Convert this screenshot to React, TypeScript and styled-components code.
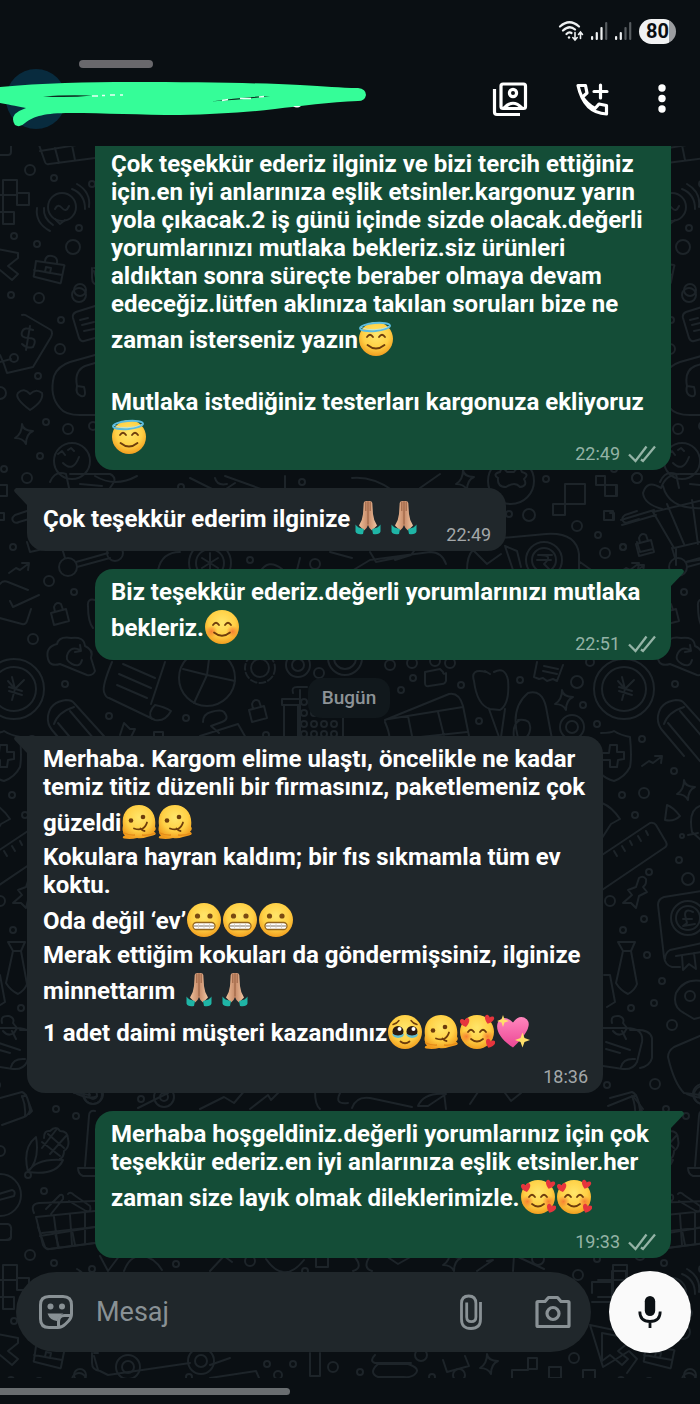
import React from 'react';
import styled, { createGlobalStyle } from 'styled-components';

const GlobalStyle = createGlobalStyle`
  * { box-sizing: border-box; }
  body { margin: 0; background: #0a0f13; font-family: Roboto, "Noto Sans", sans-serif; }
  button { border: 0; padding: 0; background: none; color: inherit; cursor: pointer; display: flex; align-items: center; justify-content: center; }
`;

const Screen = styled.div`
  color: #fff;
  background: #0a0f13;
  overflow: hidden;
`;

const StatusBar = styled.div`
  display: flex;
  align-items: center;
  justify-content: flex-end;
  gap: 7px;
  height: 56px;
  padding: 6px 24px 0 0;
`;

const Battery = styled.span`
  display: flex;
  align-items: center;
  justify-content: center;
  width: 37px;
  height: 25px;
  border-radius: 13px;
  background: linear-gradient(90deg, #f1f2f3 80%, #9b9da0 80%);
  color: #0a0f13;
  font-size: 20px;
  font-weight: 700;
  line-height: 25px;
`;

const Header = styled.header`
  display: flex;
  align-items: center;
  justify-content: space-between;
  height: 90px;
`;

const HeaderActions = styled.div`
  display: flex;
  align-items: center;
  gap: 34px;
  padding: 0 26px 4px 0;
`;

const IconButton = styled.button<{ $width: number }>`
  width: ${(p) => p.$width}px;
  height: 48px;
`;

const ChatArea = styled.div`
  position: relative;
  overflow: hidden;
  padding-bottom: 25px;
`;

const Wallpaper = styled.svg`
  position: absolute;
  inset: 0;
  width: 100%;
  height: 100%;
`;

const Messages = styled.main`
  position: relative;
  display: flex;
  flex-direction: column;
  gap: 18px;
  padding: 0 29px 13px 27px;
`;

const Bubble = styled.article<{ $sent?: boolean; $continued?: boolean }>`
  position: relative;
  align-self: ${(p) => (p.$sent ? 'flex-end' : 'flex-start')};
  max-width: 576px;
  padding: ${(p) => (p.$continued ? 4 : 9)}px 15px 6px 16px;
  background: ${(p) => (p.$sent ? '#144d37' : '#20272b')};
  border-radius: ${(p) => (p.$continued ? '0 0 18px 18px' : p.$sent ? '18px 0 18px 18px' : '0 18px 18px 18px')};

  &::after {
    content: ${(p) => (p.$continued ? 'none' : '""')};
    position: absolute;
    top: 0;
    ${(p) => (p.$sent ? 'left: 100%' : 'right: 100%')};
    width: 13px;
    height: 17px;
    background: inherit;
    clip-path: ${(p) =>
      p.$sent ? 'polygon(0 0, 85% 0, 100% 12%, 95% 24%, 0 100%)' : 'polygon(100% 0, 15% 0, 0 12%, 5% 24%, 100% 100%)'};
  }
`;

const Text = styled.p`
  margin: 0;
  font-size: 24px;
  font-weight: 700;
  line-height: 28px;
`;

const StampSpace = styled.span<{ $width: number }>`
  display: inline-block;
  width: ${(p) => p.$width}px;
  height: 1px;
`;

const Stamp = styled.footer<{ $sent?: boolean }>`
  display: flex;
  justify-content: flex-end;
  align-items: center;
  gap: 8px;
  height: 20px;
  margin-top: -14px;
  font-size: 18px;
  line-height: 20px;
  color: ${(p) => (p.$sent ? '#94b3a6' : '#a3a7a9')};
`;

const DatePill = styled.time`
  align-self: center;
  padding: 0 14px;
  border-radius: 14px;
  background: #11181c;
  color: #8d9397;
  font-size: 19px;
  font-weight: 500;
  line-height: 40px;
`;

const EmojiSvg = styled.svg`
  width: 36px;
  height: 42px;
  vertical-align: -12px;
`;

const Composer = styled.form`
  position: relative;
  display: flex;
  align-items: center;
  gap: 18px;
  padding: 0 9px 0 16px;
`;

const Field = styled.div`
  flex: 1;
  display: flex;
  align-items: center;
  height: 80px;
  padding: 0 18px 0 20px;
  border-radius: 40px;
  background: #20272b;
  color: #899195;
`;

const MessageInput = styled.input`
  flex: 1;
  min-width: 0;
  margin-left: 18px;
  border: 0;
  outline: 0;
  background: none;
  color: #fff;
  font: 400 27px Roboto, sans-serif;
  &::placeholder { color: #899195; opacity: 1; }
`;

const FieldActions = styled.div`
  display: flex;
  gap: 42px;
`;

const MicButton = styled.button`
  width: 82px;
  height: 82px;
  && { background: #fafafa; }
  border-radius: 50%;
`;

const GestureBar = styled.div`
  height: 26px;
  padding-top: 10px;
  &::before {
    content: "";
    display: block;
    width: 42%;
    max-width: 290px;
    height: 7px;
    border-radius: 0 4px 4px 0;
    background: #696d70;
  }
`;

/* ---------- Emoji ---------- */

type EmojiName = 'halo' | 'smile' | 'melt' | 'grimace' | 'pray' | 'tears' | 'love' | 'sparkleHeart';

const emojiLabels: Record<EmojiName, string> = {
  halo: '😇', smile: '😊', melt: '🫠', grimace: '😬', pray: '🙏🏼', tears: '🥹', love: '🥰', sparkleHeart: '💖',
};

const GradientDefs = styled.svg`
  position: absolute;
  width: 0;
  height: 0;
`;

const Gradients = () => (
  <GradientDefs aria-hidden="true">
    <defs>
      <radialGradient id="face" cx="50%" cy="38%" r="64%">
        <stop offset="0" stopColor="#ffe66b" />
        <stop offset="0.6" stopColor="#ffd045" />
        <stop offset="1" stopColor="#f09a1c" />
      </radialGradient>
      <radialGradient id="blush">
        <stop offset="0" stopColor="#f4682c" stopOpacity="0.75" />
        <stop offset="1" stopColor="#f4682c" stopOpacity="0" />
      </radialGradient>
      <linearGradient id="skin" x1="0" x2="1">
        <stop offset="0" stopColor="#efc09b" />
        <stop offset="0.5" stopColor="#c68a68" />
        <stop offset="1" stopColor="#f2c6a3" />
      </linearGradient>
      <linearGradient id="pink" x1="0" y1="0" x2="0" y2="1">
        <stop offset="0" stopColor="#ff86bd" />
        <stop offset="1" stopColor="#ec4795" />
      </linearGradient>
    </defs>
  </GradientDefs>
);

const Disc = () => <circle cx="18" cy="20.500" r="17" fill="url(#face)" />;
const Brown = { stroke: '#6d3c0c', strokeWidth: 1.8, fill: 'none', strokeLinecap: 'round' as const };
const HappyEyes = () => <path d="M9 18.500q3-4.500 6 0M21 18.500q3-4.500 6 0" {...Brown} />;
const Blush = () => (
  <>
    <circle cx="7.500" cy="25" r="6" fill="url(#blush)" />
    <circle cx="28.500" cy="25" r="6" fill="url(#blush)" />
  </>
);
const heart = 'M0 4.500C-6 0.500-5.500-4-2.500-4Q-0.500-4 0-2Q1-4 3-4C6-3.500 5 1.500 0 4.500Z';

const emojiArt: Record<EmojiName, React.ReactNode> = {
  halo: (
    <>
      <Disc /><HappyEyes />
      <path d="M9.500 26.500q8.500 7 17 0" {...Brown} />
      <ellipse cx="17" cy="8.500" rx="15" ry="4" transform="rotate(-5 17 8.500)" fill="none" stroke="#5bbce0" strokeWidth="2" />
      <path d="M3 9q13 5 28-1" stroke="#b4e6f4" strokeWidth="0.800" fill="none" />
    </>
  ),
  smile: (<><Disc /><Blush /><HappyEyes /><path d="M10 26q8 6.500 16 0" {...Brown} /></>),
  melt: (
    <>
      <path d="M2 24C0 11 8 3.500 18 3.500S36 12 34 25q2 3-1 5q4 3-1 4q-3 .5-6 1.500q-5 2-10 1q-6 1.500-13 .5q-3-1.500 1-3q-2-1-2-4q-1-2 0-6Z" fill="url(#face)" />
      <path d="M2 31q6 3 12 2.500M34 31.500q-7 3-13 2" stroke="#e58b19" strokeWidth="1.300" fill="none" />
      <circle cx="10" cy="19" r="2.300" fill="#6d3c0c" /><circle cx="22" cy="15.500" r="2.300" fill="#6d3c0c" />
      <path d="M13 27q10 3.500 13-6M19.500 27q2 2.500 4 2.500" {...Brown} />
    </>
  ),
  grimace: (
    <>
      <Disc />
      <circle cx="11.500" cy="16.500" r="2.600" fill="#7a4a12" /><circle cx="24" cy="16.500" r="2.600" fill="#7a4a12" />
      <rect x="7" y="23" width="22" height="7" rx="3.500" fill="#fff" stroke="#94661c" strokeWidth="1.300" />
      <path d="M8 26.500h20" stroke="#8b7f6c" strokeWidth="1.100" />
      <path d="M12.500 24v5M18 24v5M23.500 24v5" stroke="#cfcac0" strokeWidth="0.800" />
    </>
  ),
  pray: (
    <>
      <path d="M17.500 3.500q-3.500-.5-3.800 2l-.7 11q-.5 6-4 11.500l5 5q3-2 4-5.500q1 3.500 4 5.500l5-5q-3.500-5.500-4-11.500l-.7-11q-.3-2.500-3.800-2Z" fill="url(#skin)" />
      <path d="M18 4v23M15.800 4.500v9M20.200 4.500v9" stroke="#925b3d" strokeWidth="0.900" fill="none" />
      <path d="M5.500 27q2 3.500 8.500 4.500l-1 5q-6.500 1-7.500-2.500ZM30.500 27q-2 3.500-8.500 4.500l1 5q6.500 1 7.500-2.500Z" fill="#1fb5a6" />
    </>
  ),
  tears: (
    <>
      <Disc />
      <path d="M6 13q4-1 6-4M30 13q-4-1-6-4" {...Brown} strokeWidth="1.400" />
      <circle cx="11" cy="20" r="5.500" fill="#2a1a12" /><circle cx="25" cy="20" r="5.500" fill="#2a1a12" />
      <circle cx="12.500" cy="17.500" r="2" fill="#fff" /><circle cx="26.500" cy="17.500" r="2" fill="#fff" />
      <path d="M5 22q6 4 12 0q0 4-6 4.500q-5-.5-6-4.500ZM19 22q6 4 12 0q0 4-6 4.500q-5-.5-6-4.500Z" fill="#63bdd0" />
      <path d="M13.500 30q4.500 3.500 9 0" {...Brown} />
    </>
  ),
  love: (
    <>
      <Disc /><Blush />
      <g transform="translate(0 2)"><HappyEyes /></g>
      <path d="M12 27.500q6 5 12 0" {...Brown} />
      <g fill="#e6353d">
        <path d={heart} transform="translate(6 11) rotate(-12)" />
        <path d={heart} transform="translate(30 8) rotate(18)" />
        <path d={heart} transform="translate(31 32) rotate(20)" />
      </g>
    </>
  ),
  sparkleHeart: (
    <>
      <path d="M18 36C4 27-1 16 4 9q6-6 14 2q7-9 14-3q7 8-14 28Z" fill="url(#pink)" />
      <path d="M8 3.500l1.500 4.500 4.500 1.500-4.500 1.500-1.500 4.500-1.500-4.500-4.500-1.500 4.500-1.500ZM27.500 21l2 5.500 5.500 2-5.500 2-2 5.500-2-5.500-5.500-2 5.500-2Z" fill="#ffdf6a" />
    </>
  ),
};

const Emoji = ({ name }: { name: EmojiName }) => (
  <EmojiSvg viewBox="0 0 36 41" role="img" aria-label={emojiLabels[name]}>{emojiArt[name]}</EmojiSvg>
);

/* ---------- Icons ---------- */

const Ticks = () => (
  <svg width="28" height="18" viewBox="0 0 28 18" fill="none" stroke="currentColor" strokeWidth="2.300" role="img" aria-label="İletildi">
    <path d="M1 9.500L7.500 16L18.500 1.500M13 14.500L15 16L27 1.500" />
  </svg>
);

const Wifi = () => (
  <svg width="26" height="22" viewBox="0 0 26 22" fill="none" stroke="#eef0f1" strokeWidth="2.200" strokeLinecap="round" aria-hidden="true">
    <path d="M2 6.500Q11.500-2 21 6.500M5 10.500Q11.500 4.500 17 9.500M8.500 14Q11 11.500 13.500 13" />
    <circle cx="11" cy="17.500" r="1.200" fill="#eef0f1" stroke="none" />
    <path d="M17 12.500v7M14.800 17.500l2.200 2.500 2.200-2.500M22.500 18.500v-6M20.500 14.500l2-2.500 2 2.500" strokeWidth="1.600" />
  </svg>
);

const Signal = ({ level }: { level: number }) => (
  <svg width="17" height="20" viewBox="0 0 17 20" aria-hidden="true">
    {[4, 8, 13, 18].map((h, i) => (
      <rect key={h} x={i * 4.7} y={19 - h} width="2.200" height={h} rx="1" fill={i < level ? '#eef0f1' : '#565b5f'} />
    ))}
  </svg>
);

const Contact = () => (
  <svg width="372" height="90" viewBox="0 56 372 90" role="img" aria-label="Kişi bilgisi gizlendi">
    <rect x="79" y="60" width="74" height="8" rx="4" fill="#69686c" />
    <circle cx="36" cy="99" r="30" fill="#082b3e" />
    <path
      d="M0 87C40 83 90 82 130 82C200 82 260 83 300 85C325 86 340 88 358 88Q366 89 366 95Q365 101 358 101C330 102 300 106 275 109C240 113 215 114 180 115C140 115 105 113 70 113C45 113 34 116 25 123Q20 128 15 125Q11 119 15 114Q20 110 26 108C15 106 7 104 0 103Z"
      fill="#35fd98"
    />
    <path d="M43 96.500Q65 94.500 92 95.500Q70 98 43 96.500M211 101.500Q240 97 270 96Q250 99 211 101.500Z" fill="#0d2b20" />
    <path d="M92 96h6M102 95.500h3M110 95h5M120 95h3M222 100.500l6-1M240 98.500h11M259 97l5-.5" stroke="#e9fff4" strokeWidth="1.500" />
    <path d="M293 106q4 3 8 0Z" fill="#fff" />
  </svg>
);

const GalleryIcon = () => (
  <svg width="36" height="36" viewBox="0 0 36 36" fill="none" stroke="#fff" strokeWidth="3.200" aria-hidden="true">
    <rect x="9" y="3" width="24.500" height="24.500" rx="2" />
    <path d="M2.500 8v23q0 2.500 2.500 2.500h23" />
    <circle cx="21" cy="12" r="3.600" />
    <path d="M12 27q9-9.500 18 0" />
  </svg>
);

const CallAddIcon = () => (
  <svg width="34" height="34" viewBox="0 0 34 34" fill="none" stroke="#fff" strokeWidth="3.200" strokeLinejoin="round" aria-hidden="true">
    <path d="M3 3.500h7.500l1.500 7.500-4.500 4Q12 22 20 26.500l4-4.500 7.500 1.500v8.500Q9 31 3 3.500Z" />
    <path d="M25.500 3v13M19 9.500h13" strokeLinecap="round" />
  </svg>
);

const StickerIcon = () => (
  <svg width="36" height="36" viewBox="0 0 36 36" fill="none" stroke="currentColor" strokeWidth="3" aria-hidden="true">
    <path d="M11 2.500h14q8.500 0 8.500 8.500v9q0 4-3 7l-3 3q-3.500 3.500-7.500 3.500H11q-8.500 0-8.500-8.500V11q0-8.500 8.500-8.500Z" />
    <path d="M20.500 33v-5q0-6.500 6-6.500h7" />
    <circle cx="12.500" cy="12.500" r="3" fill="currentColor" stroke="none" />
    <circle cx="24" cy="12.500" r="3" fill="currentColor" stroke="none" />
    <path d="M9.500 19.500h16q-5 2-6.500 7.500-7-.5-9.500-7.500Z" fill="currentColor" stroke="none" />
  </svg>
);

const ClipIcon = () => (
  <svg width="24" height="36" viewBox="0 0 24 36" fill="none" stroke="currentColor" strokeWidth="2.800" aria-hidden="true">
    <path d="M21.500 8v17q0 9.500-9.500 9.500T2.500 25V9.500q0-7.500 7.200-7.500t7.200 7.500V23q0 4.600-4.600 4.600T7.700 23V8.500" />
  </svg>
);

const CameraIcon = () => (
  <svg width="36" height="34" viewBox="0 0 36 34" fill="none" stroke="currentColor" strokeWidth="3.200" strokeLinejoin="round" aria-hidden="true">
    <path d="M3 6.500h7l3.500-4h9l3.500 4h7q1 0 1 1v23q0 1-1 1H3q-1 0-1-1v-23q0-1 1-1Z" />
    <circle cx="18" cy="18.500" r="6" />
  </svg>
);

const MicIcon = () => (
  <svg width="24" height="34" viewBox="0 0 24 34" fill="none" stroke="#0b1014" strokeWidth="2.800" aria-hidden="true">
    <rect x="6.800" y="1" width="10.400" height="20" rx="5.200" fill="#0b1014" stroke="none" />
    <path d="M1.800 16.500q0 10 10.200 10t10.200-10M12 26.500v6.500" />
  </svg>
);

/* ---------- Wallpaper ---------- */

const dots: Array<[number, number, number]> = [
  [30, 170, 5], [54, 178, 3], [92, 184, 3], [14, 236, 3], [37, 244, 3], [73, 247, 7], [79, 228, 3], [11, 295, 3], [39, 298, 5],
  [79, 295, 7], [61, 320, 3], [60, 349, 5], [38, 376, 3], [0, 393, 6], [46, 422, 3], [68, 429, 5], [93, 426, 4], [40, 456, 3],
  [4, 469, 3], [27, 478, 5], [13, 547, 3], [49, 581, 5], [74, 592, 3], [33, 639, 5], [65, 684, 3], [109, 716, 3], [186, 718, 3],
  [319, 673, 5], [250, 560, 3], [315, 564, 5], [302, 482, 3], [181, 487, 3], [266, 735, 3],
  [546, 479, 3], [509, 514, 3], [529, 515, 6], [577, 526, 5], [598, 535, 3], [605, 553, 5], [623, 547, 3], [637, 478, 5],
  [390, 665, 5], [413, 678, 3], [401, 690, 3], [461, 685, 3], [520, 680, 3], [577, 682, 6], [583, 705, 3], [597, 724, 3], [479, 721, 3],
  [590, 662, 4], [412, 663, 5], [435, 661, 5], [450, 663, 5],
  [32, 739, 3], [12, 795, 3], [34, 793, 5], [25, 815, 3], [64, 771, 3], [69, 860, 3], [78, 879, 6], [39, 872, 3], [0, 901, 5],
  [34, 919, 3], [13, 930, 3], [37, 955, 3], [52, 981, 3], [44, 1003, 3], [21, 1008, 3], [62, 1025, 5], [45, 1084, 5], [-3, 1085, 3],
  [56, 1109, 3], [76, 1116, 3], [44, 1191, 3], [0, 1151, 5], [141, 1099, 3], [93, 1095, 9], [93, 1095, 4], [164, 1097, 10], [164, 1097, 4],
  [176, 179, 3], [250, 176, 5], [305, 186, 3], [597, 174, 3], [578, 190, 5], [293, 279, 3], [267, 279, 3], [333, 282, 5],
  [128, 282, 12], [128, 282, 6], [201, 276, 13], [201, 276, 6], [189, 292, 3], [421, 270, 6], [360, 287, 3], [432, 292, 3],
  [459, 290, 6], [574, 273, 5], [538, 174, 6], [80, 290, 6], [278, 290, 4],
];

const Sparkle = ({ x, y }: { x: number; y: number }) => (
  <path d={`M${x - 2} ${y - 10}q1 7 11 7q-7 3-7 13q-3-6-11-6q7-4 7-14Z`} />
);
const Lock = ({ x, y }: { x: number; y: number }) => (
  <path d={`M${x - 9} ${y - 2}l15-4 3 12-15 4ZM${x - 5} ${y - 3}l-1-5q2-6 7-3l2 6`} />
);
const Zig = ({ x, y }: { x: number; y: number }) => (
  <path d={`M${x} ${y}l7-5 4 2 8-6M${x + 13} ${y - 10}l7 0-1 7`} />
);

const Tile = () => (
  <g id="doodles">
    {dots.map(([cx, cy, r], i) => <circle key={i} cx={cx} cy={cy} r={r} />)}
    <path d="M0 155h8q3 0 3-3v-6M38 142l7 20q1 3 4 2l46-6M40 151l55-9M55 148l4 15M72 145l3 15M-12 195H17V180H3v44h11v-12H3M17 193h12v12H17ZM-12 212H3" />
    <circle cx="62" cy="207" r="14" /><path d="M55 219l5 5 5-4M55 209q3-6 7-1t7-2M50 231q-15-8-13-23M53 225q-10-7-9-17M72 189q13 5 13 20M77 184q14 8 12 23" />
    <path d="M-8 248l26 5v5l-10 8 10 8-6 6-12-10-8 6Z" />
    <path d="M36 261l28 4q1 0 0 2l-3 15q0 2-2 1l-24-6q-2 0-1-2l2-14M34 270l28 5M45 261q1-6 7-5t5 7M46 267l5 1-1 5-5-1Z" />
    <path d="M22 315q3-1 5 1l24 14q2 3 0 7l-18 30-26 6q-3-10-7-18M-4 363l15-4M33 330q-9-4-11 2t7 6 4 9q-6 2-11-3M30 326l-4 24" /><circle cx="14" cy="358" r="4" />
    <path d="M95 306l-19 6q-4 2-3 6l6 20q2 4 5 3l11-3M80 320l8-2M82 325l12-3M84 331l10-2" />
    <path d="M95 355l-25 7q-12 4-16 14-5 20 6 32 5 7 20 7h15M77 386q-3-15 8-20l10-3M77 386q-2 8 4 10t3-9Z" />
    <path d="M30 410Q14 398 18 393q6-6 12 1 6-6 12-1 2 8-12 17Z" /><Sparkle x={24} y={434} />
    <circle cx="72" cy="461" r="18" /><path d="M58 454l4-3 3 4M68 450l3-2 3 3M63 463q10 10 16-6M50 482q5-12 16-8l3 14M70 474h40q6 3 4 8l-6 9M80 484l22 2M0 485h7v11H0" />
    <path d="M95 476q20 12 42 0M190 478l30 15 15-10M225 476l50 18 10-6V476M215 478q2 8 12 6" />
    <path d="M27 511l-12 4q-4 3-2 6 2 3 6 1l10-3M0 513h4v7H0M27 542l3 10 13-3" />
    <circle cx="68" cy="567" r="9" /><circle cx="115" cy="553" r="8" /><path d="M76 562l32-9M77 567l33-9M65 558l-3-10" />
    <Zig x={9} y={573} /><path d="M28 590l-20-8q-5-2-8 2M-8 616l30 8q4 1 5-3l4-12M10 601l3 6 26-12M95 600q-8-2-7 6 0 16 5 22" /><Lock x={60} y={615} />
    <path d="M48 659q-3-12 9-15 2-8 14-6 13-2 14 8 9 4 6 12l4 13q-2 5-8 4l-27-11q-10 3-12-5M80 650q-8-4-12 3t4 11 10-4M80 645l1 6-6 1" />
    <circle cx="14" cy="689" r="30" /><circle cx="14" cy="689" r="22" /><path d="M12 677l3 12-3 11M15 689l9-9M15 689l-7-8M9 691l13 4M9 687l13 4" />
    <path d="M48 716q2-14 18-16 6 0 8 3l38 42M48 716q-1 8 4 14l22 26M54 724q4-12 20-17M70 711l36 42M58 723l32 38" />
    <path d="M112 662q-10 24-8 30 2 6 5 6l46 22q10 2 16-9-6-4-16-6-8 8-3 14M165 662l-14 42M123 664l32 14M119 674l32 14M117 685l30 13" />
    <circle cx="207" cy="678" r="28" /><path d="M207 675l-24-6M207 675l28 6M207 675l-13 28M207 675l3-24" />
    <circle cx="260" cy="668" r="9" /><circle cx="260" cy="668" r="15" strokeDasharray="6 3" /><Lock x={258} y={712} />
    <circle cx="298" cy="665" r="12" /><circle cx="298" cy="665" r="6" /><circle cx="345" cy="658" r="17" /><circle cx="345" cy="658" r="11" />
    <path d="M282 699h18v6h-18ZM284 705v35M298 705v35M293 693q-2-6 4-6h10M300 690v50M343 710v30" />
    {[304, 314, 324, 334].map((x) => [702, 713, 724, 734].map((y) => <circle key={`${x}-${y}`} cx={x} cy={y} r="3" />))}
    <path d="M203 722q0-8 8-10 10-3 13 0 6 7-2 10l-11 4 8 7M200 736l38-12 8 14M120 735l4-12 6 6 5 0-5 10M154 740v-8h9v8" />
    <path d="M158 570q4-18 22-18M300 558l-4 16M330 552l22 6" /><circle cx="210" cy="563" r="21" /><circle cx="210" cy="563" r="14" /><path d="M210 553v18M202 558l16 10M218 558l-16 10" />
    <path d="M260 572q8-14 22-3M350 572l20-12 60-8q12 0 16 12M395 560l16-5 3-4M352 478q20-2 40 12M420 488l20-14M370 552l6 10 30-6" /><Sparkle x={465} y={480} />
    <circle cx="511" cy="481" r="23" /><path d="M498 478q-6-4 2-6 2-7 7 0h7q5-8 8 0 8 2 2 7 4 7-4 8-5-6-14 0-9 0-8-9" />
    <path d="M565 484h20v20h-20ZM553 504h12v11h-12ZM596 476h9v9h-9ZM605 485h11v11h-11ZM604 511h9v9h-9Z" />
    <path d="M662 509q-18-5-19-16 4-14 18-5 5-14 18-14M663 486q6 24 40 22M621 520l33-10M622 525l34-10M653 512l21 36 30-7M653 512l50-12M667 504l17 40M692 500l6 44" /><Lock x={645} y={546} />
    <path d="M380 533h100q8 0 10 6l56-5q30-2 33 20v15M505 546l8 24M505 546l12 5 4 16M467 570q0-14 6-20l14 14 14-10M580 562l14 10M676 549v16M686 562l25-4" />
    <circle cx="544" cy="560" r="18" /><circle cx="544" cy="560" r="12" /><path d="M538 555h14M537 560h14M540 555q14 0 4 9l8 8" /><Zig x={624} y={575} />
    <path d="M425 672l15-3 3 3q0 3 3 1v8q-1 3-4 3l-13 2q-4 1-4-3ZM537 662l-3 15 5 2 4-1 4 3 6-2 4 2 6-16M544 666l14 3M543 671l14 3" />
    <path d="M486 672q-16-4-12 9 3 24 16 28l10 1q10-6 8-30-3-14-14-8M490 674l-5-3M489 709l10 28M505 709l-4 28" />
    <path d="M385 720l64-26q10-2 14 12l6 30M385 722q6 14 4 20M389 719l74-12M408 716l5 25M438 712l6 24M392 740l75-8M518 738q-8-30 10-45 14-4 18 14l6 32M520 720q-8 4-6 18 14 4 16-8t-12-10Z" />
    <Sparkle x={564} y={700} /><circle cx="572" cy="727" r="12" /><circle cx="572" cy="727" r="6" />
    <path d="M-9 733q10 0 13-2 6 4 16 6 2 20 0 30-5 10-16 14-8-2-14-8M0 745l7 0 0 7 7 0 0 7-6 1-1 7-7 0 0-7-8 0 0-7 7 0Z" /><Zig x={32} y={766} /><Sparkle x={76} y={790} />
    <path d="M57 805q6 2 13 11-6 6-15 4ZM-8 803q10 4 18 16l-9 5-9 14M90 806q-12 4-8 26l10 9M78 835l10-2" /><circle cx="72" cy="836" r="2" />
    <path d="M-8 855l48-32q4-1 6 2l10 17q2 4-2 6L-8 890M4 851l3 5M12 846l3 5M20 841l2 4M28 836l3 5M36 831l2 4" />
    <path d="M18 890l8-3 3-9q4-3 7 1 1 5-3 8l4 5-8 4-3 12-5-5-8 0 9-8Z" />
    <path d="M92 891l-38 6q-6 2-6 8l6 52q1 8 8 10l8 0M92 943l-32 7q-5 3-5 9M66 956l26-4M72 956l1 14 6-6 7 5-2-16" /><circle cx="78" cy="918" r="17" /><circle cx="78" cy="918" r="12" /><path d="M83 912q-8-4-8 3l2 8-4 3 12-2M73 919h9" />
    <path d="M8 942h17l-4 9H13ZM13 951l-7 32q4 7 12 11 7-4 9-10l-6-33M-6 975l6 0 5 27-8 5M92 981q-18-3-26 12-4 14 8 20l10 6 8-2" /><circle cx="80" cy="996" r="5" />
    <path d="M2 1023q-2-8 7-7 6 2 4 7l4 5-3 5q-6 4-11-2M12 1031l4 8M-8 1028l24 0q18 0 16 14l-5 20q-4 8-14 7l-20-3M20 1030q20-2 22 8v20q-2 8-12 10M-4 1042l24 8M-4 1049l14 4M11 1067q2-9 14-8M92 1035l-28 12q-6 4-6 10 6 26 16 36l16 2" /><circle cx="93" cy="1094" r="10" />
    <path d="M0 1098l22-6q6 2 8 18-2 6-6 7L2 1125M22 1096q4 10 3 20M22 1097l4-2 6 16-3 3M28 1172Q22 1148 36 1137Q40 1160 28 1172M28 1172Q36 1158 63 1160Q56 1176 28 1172M44 1138q0-8 6-7 6-6 10 0 8 0 8 8 2 8-4 12 0 6-4 8M42 1142l18 14M48 1134l16 14M56 1130l-14 18M66 1136l-16 18" /><circle cx="28" cy="1175" r="3" />
    <circle cx="0" cy="1195" r="21" /><path d="M-8 1196l20-6q4 1 2 6l-22 6M95 1111q-6-1-6 5l-4 50M95 1168H78q0 6 5 8h12M0 1224h8q4 1 3 8v5q-2 3-6 3H0" />
    <path d="M34 1213q-4-9 5-10l56-2M36 1217l7 28q2 4 7 4l45-6M36 1217l59-6M46 1209l14-14q4-1 3 4l-12 15M68 1194q2-3 6 1l16 11q2 6-4 5l-17-10M54 1217l4 31M70 1215l2 30M85 1213v31M42 1233l53-6" />
    <path d="M77 1094q14 6 20 2M138 1108l30-15M200 1109l24-12 10 6 12-14M250 1109l18-14 3 5 12-12M315 1091q0 14 5 18M340 1093q-6 12 8 10M352 1108q4-12 18-10l42 9M418 1106q6-14 28-12l-18 12ZM446 1109l-2-16M470 1104l8-12M505 1093l6 8 10-8M608 1106l25-10 10 13" />
    <path d="M100 171l8 15 12-16M124 186q6-16 18-15t20 14M210 186l14-15 8 6M266 174q18 26 38 1M316 172h12v10h-12ZM354 171q10 12-1 15M370 171q-8 12 2 15M386 171l12 8 16-9M477 186l16-11-6 1M513 186l1-16 30 14" /><Sparkle x={452} y={176} />
    <path d="M592 208v-11h20v-11h14v31h-34M612 196v22M92 268v10q0 7 8 8l8 4M108 290l82-12M210 280l20-7M98 268h-4M98 285l-4-14M210 293l46-7 3 7M310 268v23h10v-23M443 275l4 12 22-6-4-10M375 270q-6 6 0 8h36M378 279h30q12 4 8 9-4 5-12 4h-26q-10-4 0-13ZM512 293v-8h16v-12h9v11h-9M549 282h12v11h-12ZM583 293v-8h12v8" /><Sparkle x={489} y={279} />
    <path d="M590 240l24 5M590 240l13 42 10-6 16-10 8 8-10 14" />
  </g>
);

const ChatWallpaper = () => (
  <Wallpaper aria-hidden="true">
    <g transform="translate(0 -146)" fill="none" stroke="#1d2429" strokeWidth="2" strokeLinejoin="round" strokeLinecap="round">
      <Tile />
      <use href="#doodles" x="610" />
      <use href="#doodles" y="1085" />
      <use href="#doodles" x="610" y="1085" />
    </g>
  </Wallpaper>
);

/* ---------- Messages ---------- */

interface MessageProps {
  time: string;
  sent?: boolean;
  continued?: boolean;
  children: React.ReactNode;
}

const Message = ({ time, sent, continued, children }: MessageProps) => (
  <Bubble $sent={sent} $continued={continued}>
    <Text>
      {children}
      <StampSpace $width={sent ? 110 : 69} />
    </Text>
    <Stamp $sent={sent}>
      <time>{time}</time>
      {sent && <Ticks />}
    </Stamp>
  </Bubble>
);

export default function App() {
  return (
    <Screen>
      <GlobalStyle />
      <Gradients />
      <StatusBar>
        <Wifi />
        <Signal level={3} />
        <Signal level={2} />
        <Battery>80</Battery>
      </StatusBar>
      <Header>
        <Contact />
        <HeaderActions>
          <IconButton $width={48} aria-label="Kişi kartları"><GalleryIcon /></IconButton>
          <IconButton $width={48} aria-label="Arama ekle"><CallAddIcon /></IconButton>
          <IconButton $width={24} aria-label="Menü">
            <svg width="8" height="30" viewBox="0 0 8 30" fill="#fff" aria-hidden="true">
              <circle cx="4" cy="4" r="3.700" /><circle cx="4" cy="14.500" r="3.700" /><circle cx="4" cy="25" r="3.700" />
            </svg>
          </IconButton>
        </HeaderActions>
      </Header>
      <ChatArea>
        <ChatWallpaper />
        <Messages>
          <Message sent continued time="22:49">
            Çok teşekkür ederiz ilginiz ve bizi tercih ettiğiniz için.en iyi anlarınıza eşlik etsinler.kargonuz yarın yola
            çıkacak.2 iş günü içinde sizde olacak.değerli yorumlarınızı mutlaka bekleriz.siz ürünleri aldıktan sonra süreçte
            beraber olmaya devam edeceğiz.lütfen aklınıza takılan soruları bize ne zaman isterseniz yazın<Emoji name="halo" />
            <br />
            <br />
            Mutlaka istediğiniz testerları kargonuza ekliyoruz <Emoji name="halo" />
          </Message>
          <Message time="22:49">
            Çok teşekkür ederim ilginize<Emoji name="pray" /><Emoji name="pray" />
          </Message>
          <Message sent time="22:51">
            Biz teşekkür ederiz.değerli yorumlarınızı mutlaka <span>bekleriz.<Emoji name="smile" /></span>
          </Message>
          <DatePill>Bugün</DatePill>
          <Message time="18:36">
            Merhaba. Kargom elime ulaştı, öncelikle ne kadar temiz titiz düzenli bir firmasınız, paketlemeniz çok
            güzeldi<Emoji name="melt" /><Emoji name="melt" />
            <br />
            Kokulara hayran kaldım; bir fıs sıkmamla tüm ev koktu.
            <br />
            Oda değil ‘ev’<Emoji name="grimace" /><Emoji name="grimace" /><Emoji name="grimace" />
            <br />
            Merak ettiğim kokuları da göndermişsiniz, ilginize minnettarım <Emoji name="pray" /><Emoji name="pray" />
            <br />
            1 adet daimi müşteri kazandınız<Emoji name="tears" /><Emoji name="melt" /><Emoji name="love" /><Emoji name="sparkleHeart" />
          </Message>
          <Message sent time="19:33">
            Merhaba hoşgeldiniz.değerli yorumlarınız için çok teşekkür ederiz.en iyi anlarınıza eşlik etsinler.her zaman size
            layık olmak dileklerimizle.<Emoji name="love" /><Emoji name="love" />
          </Message>
        </Messages>
        <Composer>
          <Field>
            <IconButton type="button" $width={40} aria-label="Çıkartmalar"><StickerIcon /></IconButton>
            <MessageInput placeholder="Mesaj" aria-label="Mesaj" />
            <FieldActions>
              <IconButton type="button" $width={40} aria-label="Dosya ekle"><ClipIcon /></IconButton>
              <IconButton type="button" $width={40} aria-label="Kamera"><CameraIcon /></IconButton>
            </FieldActions>
          </Field>
          <MicButton type="button" aria-label="Ses kaydı"><MicIcon /></MicButton>
        </Composer>
      </ChatArea>
      <GestureBar />
    </Screen>
  );
}
